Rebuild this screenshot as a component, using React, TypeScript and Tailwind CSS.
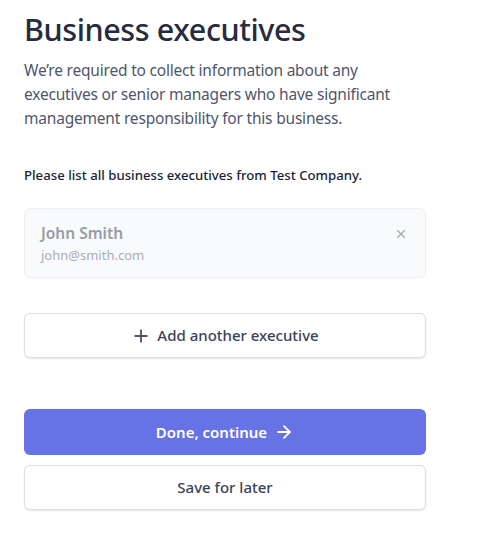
import { Plus, X, ArrowRight } from 'lucide-react';

const FONT = { fontFamily: '"Noto Sans", "Open Sans", sans-serif' };

export default function App() {
  return (
    <div className="min-h-screen bg-white" style={FONT}>
      <div className="w-[402px] ml-[24px] pt-[9px]">
        {/* Header */}
        <h1 className="text-[30.5px] leading-[40px] font-medium text-[#262b40] tracking-[-0.4px]">
          Business executives
        </h1>
        <p className="mt-[9px] text-[15.5px] leading-[24px] text-[#4f566b] tracking-[-0.2px]">
          We’re required to collect information about any executives or senior managers who have
          significant management responsibility for this business.
        </p>

        <p className="mt-[36px] text-[13.2px] leading-[18px] font-medium text-[#1a1f36]">
          Please list all business executives from Test Company.
        </p>

        {/* Executive card */}
        <div className="mt-[24px] flex items-start justify-between rounded-md border border-[#eceef2] bg-[#f9fafc] pl-4 pr-[17px] pt-[13px] pb-[12px]">
          <div>
            <p className="text-[15.5px] leading-[22px] font-semibold text-[#969ca8]">John Smith</p>
            <p className="mt-[1px] text-[13px] leading-[20px] text-[#a8aeb9]">john@smith.com</p>
          </div>
          <X className="mt-[5px] h-[14px] w-[14px] text-[#a3a8b3]" strokeWidth={2} />
        </div>

        {/* Add another */}
        <button className="mt-[35px] flex h-[45px] w-full items-center justify-center gap-[6px] rounded-md border border-[#dcdee3] bg-white text-[15px] font-medium text-[#3c4257] shadow-[0_1px_2px_rgba(0,0,0,0.1)]">
          <Plus className="h-[20px] w-[20px] text-[#4f566b]" strokeWidth={2.2} />
          Add another executive
        </button>

        {/* Actions */}
        <div className="mt-[51px] flex flex-col gap-[10px]">
          <button className="flex h-[46px] w-full items-center justify-center gap-[7px] rounded-md bg-[#6772e5] text-[15px] font-semibold text-white">
            Done, continue
            <ArrowRight className="h-[20px] w-[20px]" strokeWidth={2.2} />
          </button>
          <button className="flex h-[45px] w-full items-center justify-center rounded-md border border-[#dcdee3] bg-white text-[15px] font-medium text-[#3c4257] shadow-[0_1px_2px_rgba(0,0,0,0.1)]">
            Save for later
          </button>
        </div>
      </div>
    </div>
  );
}
